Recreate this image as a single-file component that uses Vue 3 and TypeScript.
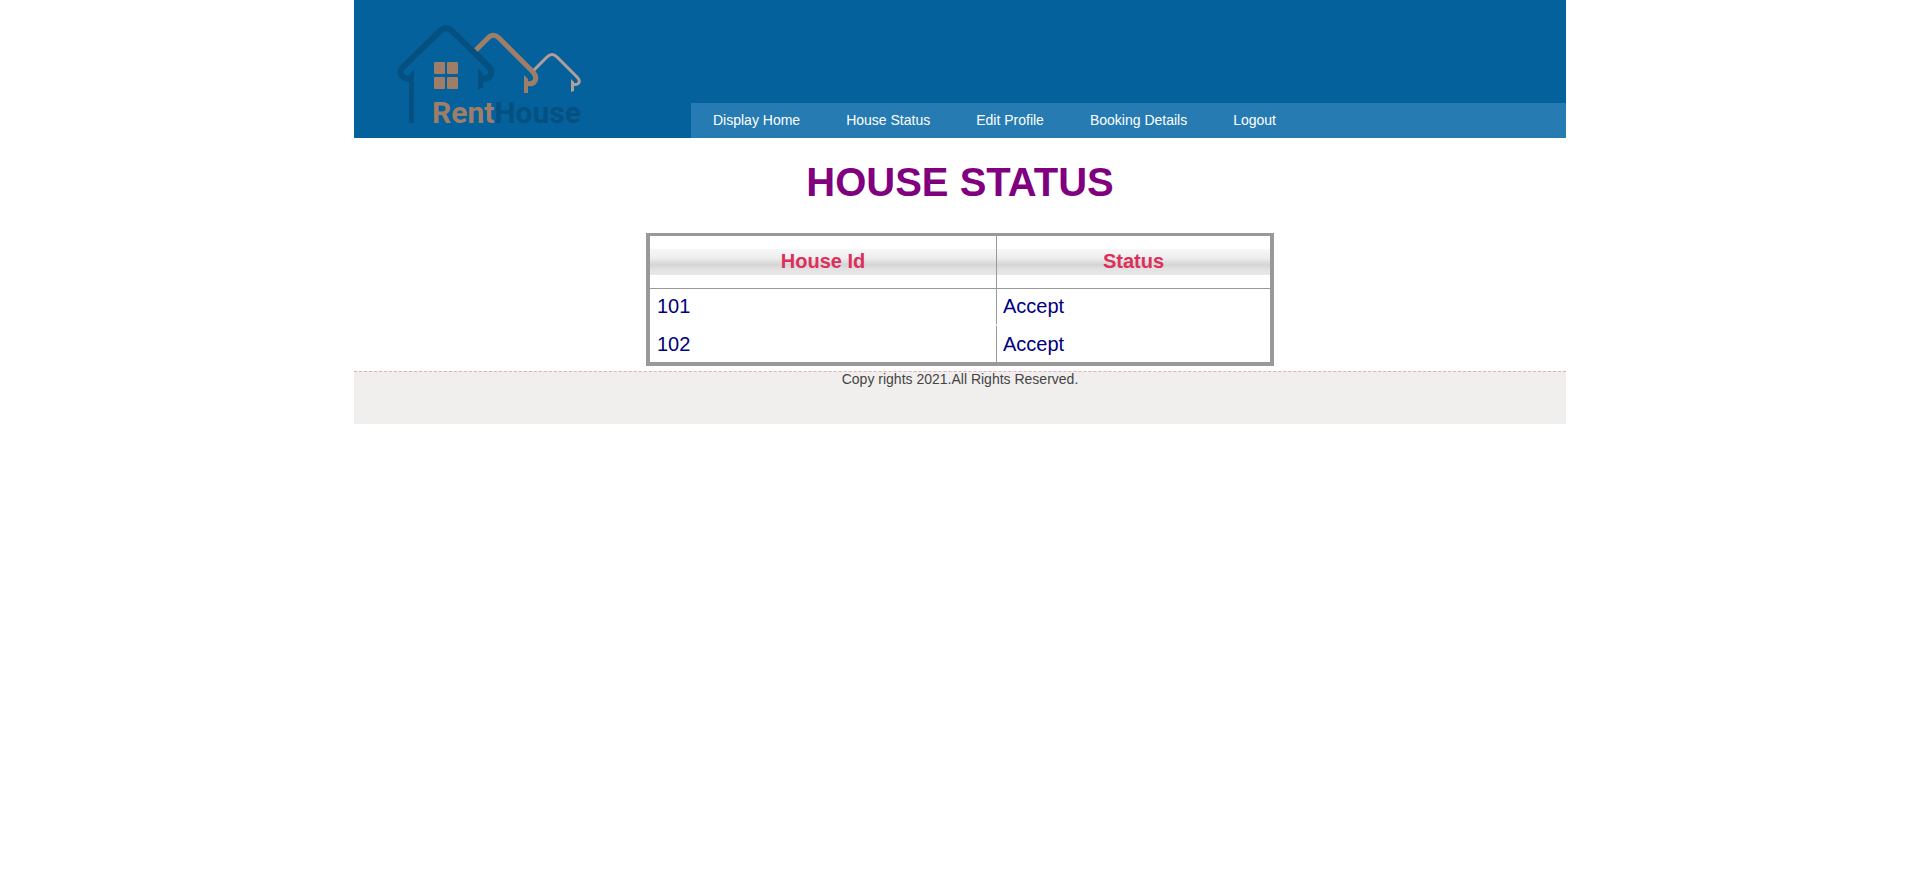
<script setup lang="ts">
interface House {
  id: number
  status: string
}

const links: string[] = ['Display Home', 'House Status', 'Edit Profile', 'Booking Details', 'Logout']

const houses: House[] = [
  { id: 101, status: 'Accept' },
  { id: 102, status: 'Accept' },
]
</script>

<template>
  <div class="page">
    <header class="header">
      <a class="brand" href="#" aria-label="RentHouse">
        <svg class="logo" width="200" height="130" viewBox="0 0 200 130" role="img" aria-label="RentHouse">
          <g fill="none">
            <path d="M19 72C9 75 3 67 9 61L46 25Q52 19 58 25L95 61C101 67 95 75 86 72" stroke="#045080" stroke-width="6" />
            <path d="M82 44L93 33Q99 26 105 32L139 66C145 73 140 80 132 77" stroke="#9f7e68" stroke-width="5" />
            <path d="M140 64L153 51Q158 46 163 51L183 71C188 76 184 80 178 78" stroke="#b39f98" stroke-width="3" />
          </g>
          <path d="M15 117V69L20 63V117Z" fill="#045080" />
          <path d="M84 62L89 68V82L84 83Z" fill="#045080" />
          <path d="M130 69L134 73V87H130Z" fill="#9f7e68" />
          <path d="M177 73L180 76V85L177 86Z" fill="#b39f98" />
          <g fill="#9f7e68">
            <rect x="40" y="56" width="11" height="12" rx="1" />
            <rect x="53" y="56" width="11" height="12" rx="1" />
            <rect x="40" y="71" width="11" height="12" rx="1" />
            <rect x="53" y="71" width="11" height="12" rx="1" />
          </g>
          <text class="wordmark" x="38" y="117" fill="#9f7e68">Rent<tspan fill="#045080">House</tspan></text>
        </svg>
      </a>
      <nav class="nav" aria-label="Main">
        <a v-for="link in links" :key="link" href="#">{{ link }}</a>
      </nav>
    </header>

    <main class="content">
      <h1>HOUSE STATUS</h1>
      <table>
        <thead>
          <tr>
            <th scope="col" class="id-column">House Id</th>
            <th scope="col">Status</th>
          </tr>
        </thead>
        <tbody>
          <tr v-for="house in houses" :key="house.id">
            <td>{{ house.id }}</td>
            <td>{{ house.status }}</td>
          </tr>
        </tbody>
      </table>
    </main>

    <footer>Copy rights 2021.All Rights Reserved.</footer>
  </div>
</template>

<style>
body {
  margin: 0;
  background: #fff;
}
</style>

<style scoped>
.page {
  max-width: 1212px;
  margin: 0 auto;
  font-family: Arial, "Liberation Sans", sans-serif;
  font-size: 14px;
}

.header {
  display: flex;
  align-items: flex-end;
  background: #04619c;
}

.brand {
  flex: 0 0 337px;
  box-sizing: border-box;
  padding: 6px 0 2px 40px;
}

.logo {
  display: block;
}

.wordmark {
  font-family: Roboto, "Liberation Sans", sans-serif;
  font-size: 30px;
  font-weight: 700;
}

.nav {
  flex: 1;
  display: flex;
  flex-wrap: wrap;
  gap: 0 46px;
  padding: 0 22px;
  background: #267bb3;
}

.nav a {
  color: #fff;
  line-height: 35px;
  text-decoration: none;
}

.content {
  padding-bottom: 5px;
}

h1 {
  margin: 0;
  padding: 20px 0 27px;
  color: #800080;
  font-size: 40px;
  line-height: 48px;
  text-align: center;
}

table {
  box-sizing: border-box;
  width: 628px;
  max-width: 100%;
  margin: 0 auto;
  border: 4px solid #999;
  border-top-width: 3px;
  border-spacing: 0;
  table-layout: fixed;
  font-size: 20px;
}

th {
  height: 50px;
  padding: 0 0 2px;
  border-bottom: 1px solid #999;
  background: linear-gradient(#f7f7f7, #eee 35%, #d5d5d5 60%, #e3e3e3 80%, #e8e8e8) center / 100% 26px no-repeat;
  color: #dc2f5c;
  line-height: 24px;
}

.id-column {
  width: 346px;
}

td {
  padding: 4px 7px 5px;
  color: #000080;
  line-height: 26px;
}

th + th,
td + td {
  border-left: 1px solid #999;
}

td + td {
  padding-left: 6px;
}

tr + tr td {
  border-top: 3px solid #fff;
}

footer {
  min-height: 52px;
  border-top: 1px dashed #eeaab8;
  background: #f1efee;
  color: #444;
  line-height: 14px;
  text-align: center;
}
</style>
